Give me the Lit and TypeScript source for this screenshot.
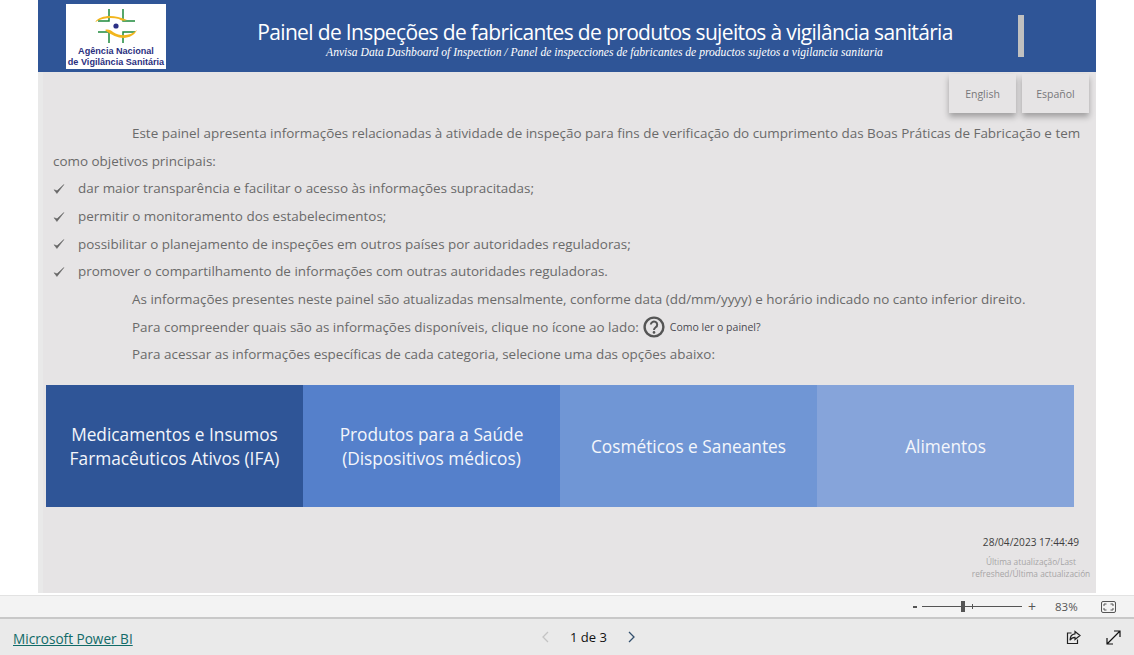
import { LitElement, html, css, svg } from "lit";
import { customElement } from "lit/decorators.js";

const checks = [
  "dar maior transparência e facilitar o acesso às informações supracitadas;",
  "permitir o monitoramento dos estabelecimentos;",
  "possibilitar o planejamento de inspeções em outros países por autoridades reguladoras;",
  "promover o compartilhamento de informações com outras autoridades reguladoras.",
];
const tiles = [
  { cls: "t1", lines: ["Medicamentos e Insumos", "Farmacêuticos Ativos (IFA)"] },
  { cls: "t2", lines: ["Produtos para a Saúde", "(Dispositivos médicos)"] },
  { cls: "t3", lines: ["Cosméticos e Saneantes"] },
  { cls: "t4", lines: ["Alimentos"] },
];

const logoMark = svg`
  <g fill="none" stroke="#1f8a3c" stroke-width="1.5">
    <path d="M18 0V12H7"/><path d="M32 0V12H44"/><path d="M18 34V23H7"/><path d="M32 34V23H44"/>
  </g>
  <path d="M4 13C10 6 22 5 36 11C33 12 30 12 28 10C20 8 11 9 4 13Z" fill="#f2b51d"/>
  <path d="M46 21C41 31 27 32 14 21C17 20 20 21 22 23C30 28 39 27 46 21Z" fill="#f2b51d"/>
  <circle cx="25" cy="17" r="2.6" fill="#2b2f86"/>`;

@customElement("app-root")
export class AppRoot extends LitElement {
  static styles = css`
    :host { display: flex; flex-direction: column; width: 1134px; height: 655px; background: #fff; overflow: hidden; font-family: "Open Sans", sans-serif; }
    .canvas { height: 593px; margin: 0 38px; display: flex; flex-direction: column; background: linear-gradient(90deg, #e9e9e9 5px, #e6e4e5 5px); flex: none; }
    .header { height: 72px; flex: none; background: #2f5597; display: flex; align-items: flex-start; padding-left: 28px; color: #fff; }
    .logo { width: 100px; height: 65px; margin-top: 4px; background: #fff; flex: none; display: flex; flex-direction: column; align-items: center; font-family: "Liberation Sans", sans-serif; font-weight: 700; font-size: 9.1px; line-height: 10.5px; color: #2b3080; white-space: nowrap; }
    .logo svg { width: 50px; height: 36px; margin-top: 5px; margin-bottom: 1px; display: block; flex: none; }
    .titles { width: 796px; flex: none; margin-left: 41px; text-align: center; }
    .title { font-size: 21px; font-weight: 400; line-height: 30px; margin-top: 17px; letter-spacing: -0.65px; white-space: nowrap; }
    .sub { font-family: "Liberation Serif", serif; font-style: italic; font-size: 11.6px; line-height: 14px; margin: -1px 1px 0 0; white-space: nowrap; }
    .gbar { width: 6px; height: 42px; margin: 15px 0 0 15px; background: #c0c0c0; flex: none; }
    .langs { display: flex; justify-content: flex-end; gap: 6px; padding: 2px 7px 0 0; flex: none; }
    .lang { width: 67px; height: 39px; display: flex; align-items: center; justify-content: center; background: #e6e4e5; font-size: 10.5px; color: #77777a; box-shadow: 0 4px 6px rgba(0,0,0,.3); }
    .body { padding: 7px 0 0 15px; font-size: 13.45px; line-height: 27.65px; color: #6a6a6a; white-space: nowrap; }
    .indent { padding-left: 79px; }
    .first { white-space: normal; text-indent: 79px; width: 1032px; }
    .check { display: flex; align-items: center; gap: 13px; }
    .check svg { width: 12px; height: 12px; flex: none; }
    .help { display: flex; align-items: center; }
    .help svg { width: 22px; height: 22px; margin: 0 5px 0 4px; flex: none; }
    .help small { font-size: 10.5px; color: #4a4a52; }
    .tiles { display: flex; margin: 16px 0 0 8px; height: 122px; flex: none; }
    .tile { width: 257px; box-sizing: border-box; padding-top: 2px; display: flex; flex-direction: column; align-items: center; justify-content: center; color: #f4f6fb; font-size: 17.3px; line-height: 23.5px; white-space: nowrap; }
    .t1 { background: #2f5597; } .t2 { background: #5580cb; } .t3 { background: #7096d5; } .t4 { background: #86a4da; }
    .stamp { align-self: flex-end; width: 126px; margin: 28px 2px 0 0; text-align: center; font-size: 8.3px; color: #a6a4a6; line-height: 12px; white-space: nowrap; }
    .date { text-align: right; color: #3e3e3e; font-size: 10.1px; line-height: 14px; padding-right: 15px; margin-bottom: 7px; }
    .zoombar { height: 21px; flex: none; margin-top: 2px; background: #f3f3f3; border-top: 1px solid #e2e2e2; border-bottom: 2px solid #c8c8c8; display: flex; align-items: center; color: #555; font-size: 12px; padding-left: 913px; }
    .minus { width: 4px; height: 2px; background: #555; flex: none; }
    .slider { width: 100px; height: 1px; margin-left: 5px; background: #555; flex: none; display: flex; align-items: center; padding-left: 39px; box-sizing: border-box; }
    .thumb { width: 4px; height: 11px; background: #555; flex: none; }
    .tick { width: 1px; height: 5px; background: #555; margin-left: 7px; flex: none; }
    .plus { margin-left: 6px; width: 9px; font-size: 14px; line-height: 14px; flex: none; }
    .pct { margin-left: 18px; width: 24px; font-size: 11.5px; flex: none; }
    .fit { width: 15px; height: 12px; margin-left: 22px; flex: none; display: block; }
    .footer { flex: 1; background: #eaeaea; display: grid; grid-template-columns: 528px 95px 1fr; align-items: center; padding-left: 13px; }
    .link { font-size: 13.6px; color: #116b68; text-decoration: underline; white-space: nowrap; justify-self: start; margin-top: 2px; }
    .pager { display: flex; align-items: center; justify-content: space-between; width: 95px; color: #111; font-size: 13px; font-weight: 500; white-space: nowrap; }
    .pager svg { width: 8px; height: 12px; flex: none; }
    .actions { display: flex; justify-content: flex-end; gap: 25px; padding-right: 13px; }
    .actions svg { width: 15px; height: 15px; display: block; }
  `;

  render() {
    return html`
      <div class="canvas">
        <div class="header">
          <div class="logo">
            <svg viewBox="0 0 50 36">${logoMark}</svg>
            <div>Agência Nacional</div>
            <div>de Vigilância Sanitária</div>
          </div>
          <div class="titles">
            <div class="title">Painel de Inspeções de fabricantes de produtos sujeitos à vigilância sanitária</div>
            <div class="sub">Anvisa Data Dashboard of Inspection / Panel de inspecciones de fabricantes de productos sujetos a vigilancia sanitaria</div>
          </div>
          <div class="gbar"></div>
        </div>
        <div class="langs"><div class="lang">English</div><div class="lang">Español</div></div>
        <div class="body">
          <div class="first">Este painel apresenta informações relacionadas à atividade de inspeção para fins de verificação do cumprimento das Boas Práticas de Fabricação e tem como objetivos principais:</div>
          ${checks.map((c) => html`<div class="check"><svg viewBox="0 0 11 11"><path d="M1 6.2 3.6 9.6 10 1.4 3.7 7.2Z" fill="#666" stroke="#666" stroke-width=".5"/></svg>${c}</div>`)}
          <div class="indent">As informações presentes neste painel são atualizadas mensalmente, conforme data (dd/mm/yyyy) e horário indicado no canto inferior direito.</div>
          <div class="indent help">Para compreender quais são as informações disponíveis, clique no ícone ao lado:
            <svg viewBox="0 0 22 22"><circle cx="11" cy="11" r="9.4" fill="none" stroke="#555" stroke-width="2.4"/><path d="M7.8 8.6a3.2 3 0 1 1 5 2.5c-1.2.9-1.8 1.3-1.8 2.9" fill="none" stroke="#555" stroke-width="2"/><circle cx="11" cy="16.4" r="1.3" fill="#555"/></svg>
            <small>Como ler o painel?</small></div>
          <div class="indent">Para acessar as informações específicas de cada categoria, selecione uma das opções abaixo:</div>
        </div>
        <div class="tiles">
          ${tiles.map((t) => html`<div class="tile ${t.cls}">${t.lines.map((l) => html`<div>${l}</div>`)}</div>`)}
        </div>
        <div class="stamp">
          <div class="date">28/04/2023 17:44:49</div>
          <div>Última atualização/Last</div>
          <div>refreshed/Última actualización</div>
        </div>
      </div>
      <div class="zoombar">
        <div class="minus"></div>
        <div class="slider"><div class="thumb"></div><div class="tick"></div></div>
        <div class="plus">+</div>
        <div class="pct">83%</div>
        <svg class="fit" viewBox="0 0 15 12"><rect x=".5" y=".5" width="14" height="11" rx="1.5" fill="none" stroke="#555"/><path d="M3 5V3H5.5M9.5 3H12V5M12 7V9H9.5M5.5 9H3V7" fill="none" stroke="#555"/></svg>
      </div>
      <div class="footer">
        <div class="link">Microsoft Power BI</div>
        <div class="pager">
          <svg viewBox="0 0 8 12"><path d="M7 1 2 6l5 5" fill="none" stroke="#c4c4c4" stroke-width="1.3"/></svg>
          <span>1 de 3</span>
          <svg viewBox="0 0 8 12"><path d="M1 1l5 5-5 5" fill="none" stroke="#33506e" stroke-width="1.3"/></svg>
        </div>
        <div class="actions">
          <svg viewBox="0 0 15 15"><path d="M5.5 3H1.5V13.5H11.5V9.5" fill="none" stroke="#222" stroke-width="1.2"/><path d="M9 1.5 14 5.5 9 9.5V7.3C6.5 7.3 5 8.3 4 10.2 4 6.5 6 4.2 9 3.8Z" fill="none" stroke="#222" stroke-width="1.2"/></svg>
          <svg viewBox="0 0 15 15"><path d="M1.5 13.5 13.5 1.5M8 1H14V7M1 8V14H7" fill="none" stroke="#111" stroke-width="1.2"/></svg>
        </div>
      </div>
    `;
  }
}
